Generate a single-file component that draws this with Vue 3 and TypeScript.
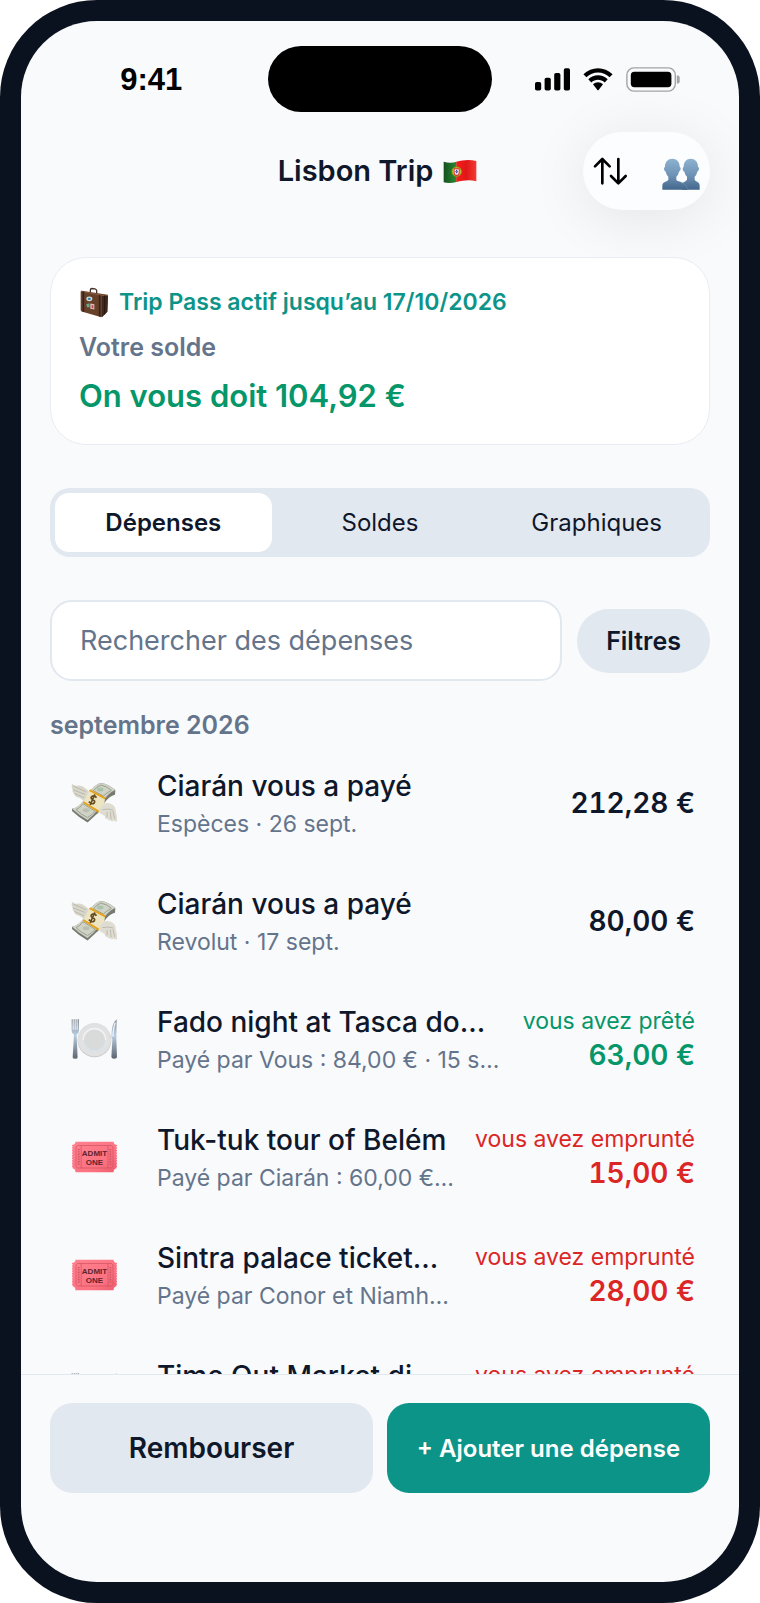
<script setup lang="ts">
import { ref } from 'vue'

type Icon = 'money' | 'plate' | 'ticket'
type Tone = 'plain' | 'lent' | 'owed'

interface Entry {
  id: number
  icon: Icon
  title: string
  detail: string
  label?: string
  amount: string
  tone: Tone
}

const tabs = ['Dépenses', 'Soldes', 'Graphiques']
const activeTab = ref('Dépenses')
const query = ref('')

const entries: Entry[] = [
  { id: 1, icon: 'money', title: 'Ciarán vous a payé', detail: 'Espèces · 26 sept.', amount: '212,28 €', tone: 'plain' },
  { id: 2, icon: 'money', title: 'Ciarán vous a payé', detail: 'Revolut · 17 sept.', amount: '80,00 €', tone: 'plain' },
  { id: 3, icon: 'plate', title: 'Fado night at Tasca do…', detail: 'Payé par Vous : 84,00 € · 15 s…', label: 'vous avez prêté', amount: '63,00 €', tone: 'lent' },
  { id: 4, icon: 'ticket', title: 'Tuk-tuk tour of Belém', detail: 'Payé par Ciarán : 60,00 €…', label: 'vous avez emprunté', amount: '15,00 €', tone: 'owed' },
  { id: 5, icon: 'ticket', title: 'Sintra palace ticket…', detail: 'Payé par Conor et Niamh…', label: 'vous avez emprunté', amount: '28,00 €', tone: 'owed' },
  { id: 6, icon: 'plate', title: 'Time Out Market di…', detail: '', label: 'vous avez emprunté', amount: '', tone: 'owed' },
]
</script>

<template>
  <div class="phone">
    <div class="screen">
      <div class="status">
        <span class="clock">9:41</span>
        <span class="island"></span>
        <span class="signals">
          <svg width="35" height="23" viewBox="0 0 35 23" aria-hidden="true">
            <rect x="0" y="14" width="6.2" height="8.5" rx="1.8" />
            <rect x="9.6" y="9.8" width="6.2" height="12.7" rx="1.8" />
            <rect x="19.2" y="5" width="6.2" height="17.5" rx="1.8" />
            <rect x="28.8" y="0.3" width="6.2" height="22.2" rx="1.8" />
          </svg>
          <svg width="30" height="23" viewBox="0 0 30 23" aria-hidden="true">
            <path d="M0.4 6.2C8.5-1.8 21.500-1.8 29.600 6.200L26.600 9.300C20.200 2.900 9.800 2.900 3.400 9.300Z" />
            <path d="M5.300 11.300C10.700 6 19.300 6 24.700 11.300L21.700 14.400C18 10.800 12 10.800 8.300 14.400Z" />
            <path d="M10 16.300C12.900 13.600 17.100 13.600 20 16.300L15.600 21.900Q15 22.500 14.400 21.900Z" />
          </svg>
          <svg width="54" height="25" viewBox="0 0 54 25" aria-hidden="true">
            <rect x="0.9" y="0.9" width="48.400" height="23.200" rx="7" fill="none" stroke="#a3a4a7" stroke-width="1.400" />
            <rect x="4.800" y="4.800" width="40.600" height="15.400" rx="3.600" />
            <path d="M50.800 8.500h1.200q1.700 0 1.700 2v4q0 2-1.700 2h-1.200z" fill="#a3a4a7" />
          </svg>
        </span>
      </div>

      <header class="header">
        <h1 class="title">
          Lisbon Trip
          <svg class="flag" width="34" height="25" viewBox="0 0 102 75" role="img" aria-label="Portugal">
            <defs>
              <linearGradient id="flagGreen" x1="0" x2="1"><stop offset="0" stop-color="#13501d" /><stop offset="1" stop-color="#2a8c32" /></linearGradient>
              <linearGradient id="flagRed" x1="0" x2="1"><stop offset="0" stop-color="#f81d1d" /><stop offset=".5" stop-color="#e01717" /><stop offset="1" stop-color="#f53a32" /></linearGradient>
            </defs>
            <path d="M2 8Q22 14 41 8V69Q20 74 2 70Z" fill="url(#flagGreen)" />
            <path d="M40 8C60 3 78 0 100 6V67C80 61 62 64 40 69Z" fill="url(#flagRed)" />
            <circle cx="41" cy="38" r="14" fill="#cfd13a" stroke="#8f9a1c" stroke-width="3" />
            <path d="M32 28H50V41Q50 50 41 51Q32 50 32 41Z" fill="#e02b2b" />
            <path d="M35 31H47V41Q47 46 41 48Q35 46 35 41Z" fill="#fff" />
            <path d="M41 32v14M37 38h8" stroke="#3b4ca8" stroke-width="4" stroke-dasharray="4 2" />
          </svg>
        </h1>
        <div class="actions">
          <button type="button" class="action" aria-label="Trier">
            <svg width="35" height="30" viewBox="0 0 105 90" fill="none" stroke="#000" stroke-width="8" stroke-linecap="round" stroke-linejoin="round" aria-hidden="true">
              <path d="M28 82V10M6 31L28 9L50 31M76 9V81M54 60L76 82L98 60" />
            </svg>
          </button>
          <button type="button" class="action people" aria-label="Membres">
            <svg width="38" height="32" viewBox="0 0 114 96" aria-hidden="true">
              <defs>
                <linearGradient id="bust" gradientUnits="userSpaceOnUse" x1="0" y1="0" x2="0" y2="96"><stop offset="0" stop-color="#8fb4d2" /><stop offset=".55" stop-color="#6e92b3" /><stop offset="1" stop-color="#42658c" /></linearGradient>
              </defs>
              <path d="M86 2C99 2 108 11 108 26Q112 28 111 34Q109 40 106 41Q104 51 98 56V65C101 71 113 70 113 83V95H60V78C62 72 72 71 75 65V56Q69 50 67 41Q62 39 62 33Q62 28 65 26C65 11 74 2 86 2Z" fill="url(#bust)" />
              <path d="M31 2C44 2 53 11 53 26Q57 28 56 34Q54 40 51 41Q49 51 43 56V65C47 74 76 68 77 95H1V83C1 70 16 72 19 65V56Q13 50 11 41Q7 39 6 33Q6 28 9 26C9 11 18 2 31 2Z" fill="url(#bust)" />
              <path d="M56 74Q73 77 77 94" fill="none" stroke="#8fafca" stroke-width="1.500" opacity=".6" />
            </svg>
          </button>
        </div>
      </header>

      <main class="content">
        <section class="balance">
          <p class="pass">
            <svg width="30" height="31" viewBox="0 0 90 92" aria-hidden="true">
              <path d="M34 18V9Q34 4 39 4L48 5Q53 6 53 11V22" fill="none" stroke="#49352c" stroke-width="4" />
              <path d="M5 14Q5 11 9 11L81 22Q88 23 87 28L85 74L69 89Q66 91 62 89L8 73Q5 72 5 68Z" fill="#67402a" />
              <path d="M69 27L87 25L85 74L69 90Z" fill="#41281d" />
              <path d="M6 12L71 25L86 23" fill="none" stroke="#9a6a4c" stroke-width="2" />
              <path d="M13 13V74M62 24V88" stroke="#38231b" stroke-width="5" />
              <path d="M77 25V82" stroke="#27170f" stroke-width="3" />
              <ellipse cx="31" cy="35" rx="9" ry="7" fill="#cde0e5" />
              <ellipse cx="31" cy="35" rx="5" ry="3.500" fill="#368198" />
              <path d="M22 51L31 48L32 60L24 60Z" fill="#68ac8b" />
              <path d="M34 49L46 51V67L34 65Z" fill="#dfc2bd" />
              <path d="M38 54h5v9h-5z" fill="#b54a50" />
            </svg>
            <span>Trip Pass actif jusqu’au 17/10/2026</span>
          </p>
          <p class="caption">Votre solde</p>
          <p class="total">On vous doit 104,92 €</p>
        </section>

        <nav class="tabs" aria-label="Vues">
          <button
            v-for="tab in tabs"
            :key="tab"
            type="button"
            class="tab"
            :class="{ active: tab === activeTab }"
            :aria-pressed="tab === activeTab"
            @click="activeTab = tab"
          >
            {{ tab }}
          </button>
        </nav>

        <div class="search">
          <input v-model="query" class="field" type="text" placeholder="Rechercher des dépenses" aria-label="Rechercher des dépenses" />
          <button type="button" class="filter">Filtres</button>
        </div>

        <h2 class="month">septembre 2026</h2>

        <ul class="list">
          <li v-for="entry in entries" :key="entry.id" class="row">
            <svg v-if="entry.icon === 'money'" class="icon" width="47" height="42" viewBox="0 0 142 126" aria-hidden="true">
              <path d="M3 5Q12 14 22 10Q37 11 46 21Q54 26 59 34L40 57Q31 51 25 47Q12 45 9 34Q3 31 5 24Q0 17 3 5Z" fill="#d9d7cb" />
              <path d="M7 12L45 29M6 23L42 37M10 34L39 47" stroke="#aaa899" stroke-width="2" />
              <path d="M38 57L61 24Q76 4 91 3Q112 4 134 24L133 38Q115 42 101 63L82 93Q70 103 50 122Q24 107 3 87V80Q22 78 38 57Z" fill="#777b71" />
              <path d="M38 55L61 24Q76 4 91 3Q112 4 134 24Q115 31 101 52L80 84Q70 98 50 114Q23 98 3 80Q22 77 38 55Z" fill="#d0d2c6" />
              <path d="M90 9Q107 11 122 25Q108 32 98 42L68 26Q78 13 90 9ZM36 65L73 88Q64 99 50 107Q31 98 15 83Q27 79 36 65Z" fill="none" stroke="#98a191" stroke-width="3" />
              <ellipse cx="88" cy="22" rx="10" ry="6" fill="#a6c3ac" />
              <ellipse cx="46" cy="85" rx="10" ry="6" fill="#b8bfaf" />
              <path d="M56 24L103 48L101 64L84 92L36 62Z" fill="#ede4c2" />
              <path d="M56 24L103 49M37 60L84 89" stroke="#e5a31b" stroke-width="6" />
              <path d="M77 47Q72 39 65 42Q56 47 65 53Q75 56 70 63Q63 69 54 59M72 37L58 69" fill="none" stroke="#674c20" stroke-width="5" />
              <path d="M86 79L101 64Q117 61 127 69Q137 78 135 91Q140 99 139 119Q133 120 128 116Q124 122 119 115Q113 117 110 111Q103 113 102 102Q95 98 86 93Z" fill="#dfddd2" />
              <path d="M95 83Q111 79 127 84M109 90V106M119 89L121 112M127 87L132 111" fill="none" stroke="#aaa99c" stroke-width="2" />
            </svg>
            <svg v-else-if="entry.icon === 'plate'" class="icon" width="47" height="42" viewBox="0 0 142 126" aria-hidden="true">
              <defs>
                <linearGradient id="steel" x1="0" y1="0" x2="0" y2="1"><stop offset="0" stop-color="#7f858d" /><stop offset=".4" stop-color="#b9cee2" /><stop offset="1" stop-color="#5d656f" /></linearGradient>
              </defs>
              <circle cx="71" cy="67" r="51" fill="#c9cbcd" />
              <circle cx="71" cy="65" r="50" fill="#e1e1e1" />
              <circle cx="71" cy="65" r="36" fill="#f2f3f4" />
              <circle cx="71" cy="66" r="32" fill="#d9dada" />
              <path d="M37 67Q41 98 71 100Q101 98 105 67" fill="none" stroke="#cadced" stroke-width="3" />
              <path d="M2 3H5V35H8V3H11V35H14V3H17V35H20V3H24V38Q24 45 17 50L20 118Q20 123 13 123Q5 123 5 118L9 50Q2 45 2 38Z" fill="url(#steel)" />
              <path d="M138 3Q122 15 122 58L125 64L122 117Q122 123 130 123Q139 123 139 117L137 62Z" fill="url(#steel)" />
              <path d="M134 13Q127 30 127 56" fill="none" stroke="#edf4fb" stroke-width="4" />
            </svg>
            <svg v-else class="icon" width="47" height="32" viewBox="0 0 47 32" aria-hidden="true">
              <defs>
                <linearGradient id="stub" x1="0" y1="0" x2="1" y2="1"><stop offset="0" stop-color="#ff8290" /><stop offset=".7" stop-color="#fc7180" /><stop offset="1" stop-color="#ed5b6b" /></linearGradient>
              </defs>
              <path d="M4.500 .7H42.500Q42.700 3.600 46 4V27Q42.700 27.400 42.500 31.300H4.500Q4.300 27.400 1 27V4Q4.300 3.600 4.500 .7Z" fill="url(#stub)" />
              <path d="M1 5V27M46 5V27" stroke="#f9fafc" stroke-width="1.200" stroke-dasharray="1.200 1.400" />
              <path d="M6.500 4.500H40.500L42 6V25.500L40.500 27H6.500L5 25.500V6ZM10.200 4.500V27M37 4.500V27" fill="none" stroke="#c94b5c" stroke-width=".6" />
              <path d="M7.700 8V24M39.400 8V24" stroke="#cf5262" stroke-width="1.800" stroke-dasharray="1 .7" />
              <text x="23.500" y="15" class="stub-text">ADMIT</text>
              <text x="23.500" y="23.500" class="stub-text">ONE</text>
            </svg>
            <div class="text">
              <p class="name">{{ entry.title }}</p>
              <p class="detail">{{ entry.detail }}</p>
            </div>
            <div class="money" :class="entry.tone">
              <p v-if="entry.label" class="label">{{ entry.label }}</p>
              <p class="amount">{{ entry.amount }}</p>
            </div>
          </li>
        </ul>
      </main>

      <footer class="footer">
        <button type="button" class="cta settle">Rembourser</button>
        <button type="button" class="cta add">+ Ajouter une dépense</button>
      </footer>
    </div>
  </div>
</template>

<style>
body {
  margin: 0;
  background: #fff;
}
</style>

<style scoped>
* {
  box-sizing: border-box;
}
p,
h1,
h2,
ul {
  margin: 0;
  padding: 0;
}
svg {
  display: block;
  flex: none;
}
button,
input {
  font: inherit;
  color: inherit;
  border: 0;
}
button {
  padding: 0;
  background: none;
  cursor: pointer;
}
.phone {
  height: 100vh;
  padding: 21px;
  border-radius: 97px;
  background: #0b121f;
  font-family: Inter, "Liberation Sans", sans-serif;
  color: #0f172a;
}
.screen {
  display: flex;
  flex-direction: column;
  height: 100%;
  border-radius: 76px;
  background: #f9fafc;
  overflow: hidden;
}
.status {
  display: grid;
  grid-template-columns: 1fr 224px 1fr;
  align-items: center;
  justify-items: center;
  padding: 25px 15px 0 14px;
}
.clock {
  padding-top: 2px;
  font: 700 31px/40px "Liberation Sans", sans-serif;
  color: #000;
}
.island {
  width: 100%;
  height: 66px;
  border-radius: 33px;
  background: #000;
}
.signals {
  display: flex;
  align-items: center;
  gap: 13px;
}
.header {
  display: grid;
  grid-template-columns: 1fr auto 1fr;
  align-items: center;
  padding: 20px 29px 0 24px;
}
.title {
  grid-column: 2;
  display: flex;
  align-items: center;
  gap: 10px;
  font-size: 29px;
  line-height: 40px;
  font-weight: 600;
}
.actions {
  justify-self: end;
  display: flex;
  align-items: center;
  gap: 34px;
  height: 78px;
  padding: 0 10px;
  border-radius: 39px;
  background: #fcfdfe;
  box-shadow: 0 8px 60px rgba(0, 0, 0, 0.09);
}
.people {
  padding-top: 6px;
}
.content {
  flex: 1;
  min-height: 0;
  overflow: hidden;
  padding: 47px 29px 0;
}
.balance {
  display: flex;
  flex-direction: column;
  gap: 12px;
  padding: 27px 28px;
  border: 1px solid #e8edf3;
  border-radius: 36px;
  background: #fff;
}
.pass {
  display: flex;
  align-items: center;
  gap: 10px;
  font-size: 23px;
  line-height: 34px;
  font-weight: 600;
  color: #0d9488;
}
.caption {
  font-size: 25px;
  line-height: 32px;
  font-weight: 600;
  color: #64748b;
}
.total {
  font-size: 31px;
  line-height: 42px;
  font-weight: 600;
  color: #059669;
}
.tabs {
  display: grid;
  grid-template-columns: repeat(3, 1fr);
  margin-top: 43px;
  padding: 5px;
  border-radius: 20px;
  background: #e2e8f0;
}
.tab {
  height: 59px;
  border-radius: 14px;
  font-size: 24px;
}
.tab.active {
  background: #fff;
  font-weight: 600;
}
.search {
  display: flex;
  align-items: center;
  gap: 15px;
  margin-top: 43px;
}
.field {
  flex: 1;
  min-width: 0;
  height: 81px;
  padding: 0 28px;
  border: 2px solid #e2e8f0;
  border-radius: 22px;
  background: #fff;
  font-size: 27px;
}
.field::placeholder {
  color: #64748b;
  opacity: 1;
}
.filter {
  height: 64px;
  padding: 0 29px;
  border-radius: 32px;
  background: #e2e8f0;
  font-size: 25px;
  font-weight: 600;
}
.month {
  margin: 28px 0 3px;
  font-size: 25px;
  line-height: 32px;
  font-weight: 600;
  color: #64748b;
}
.list {
  list-style: none;
}
.row {
  display: flex;
  align-items: center;
  height: 118px;
  padding: 0 15px 0 21px;
  white-space: nowrap;
}
.text {
  flex: 1;
  min-width: 0;
  margin-left: 39px;
}
.name {
  font-size: 28px;
  line-height: 36px;
  font-weight: 500;
}
.detail {
  min-height: 30px;
  margin-top: 5px;
  font-size: 23px;
  line-height: 30px;
  color: #64748b;
}
.money {
  text-align: right;
}
.label {
  margin-bottom: 2px;
  font-size: 23px;
  line-height: 30px;
}
.amount {
  min-height: 34px;
  font-size: 28px;
  line-height: 34px;
  font-weight: 600;
  font-variant-numeric: tabular-nums;
}
.lent {
  color: #059669;
}
.owed {
  color: #dc2626;
}
.stub-text {
  font: 700 8px "Liberation Sans Narrow", "Liberation Sans", sans-serif;
  text-anchor: middle;
  fill: #5b2530;
}
.footer {
  display: grid;
  grid-template-columns: 1fr 1fr;
  gap: 14px;
  padding: 28px 29px 89px;
  border-top: 1px solid #e2e8f0;
}
.cta {
  height: 90px;
  border-radius: 22px;
  font-weight: 600;
}
.settle {
  background: #e2e8f0;
  font-size: 28px;
}
.add {
  background: #0d9488;
  color: #fff;
  font-size: 24px;
}
</style>
